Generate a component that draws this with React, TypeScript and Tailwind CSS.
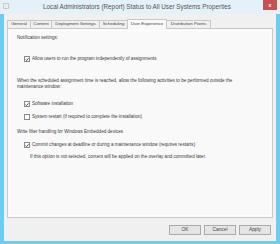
import React from "react";

const TABS = [
  { label: "General", w: "w-[24px]" },
  { label: "Content", w: "w-[22px]" },
  { label: "Deployment Settings", w: "w-[49px]" },
  { label: "Scheduling", w: "w-[29px]" },
  { label: "User Experience", w: "w-[40px]", active: true },
  { label: "Distribution Points", w: "w-[45px]" },
];

function Check({ checked }: { checked?: boolean }) {
  return (
    <div className="flex h-[6px] w-[6px] shrink-0 items-center justify-center border border-[#8a8a8a] bg-white">
      {checked ? (
        <svg width="5" height="5" viewBox="0 0 10 10">
          <path d="M1.5 5.2 L4 7.8 L8.6 2" fill="none" stroke="#222" strokeWidth="2" />
        </svg>
      ) : null}
    </div>
  );
}

function Btn({ label }: { label: string }) {
  return (
    <div className="flex h-[10px] w-[32px] items-center justify-center border border-[#acacac] bg-[#e5e5e5] text-[4.8px] text-[#444]">
      {label}
    </div>
  );
}

export default function App() {
  return (
    <div className="flex h-[244px] w-[280px] flex-col bg-[#6ccdf0] font-['Liberation_Sans',Arial,sans-serif] text-[#333]">
      {/* title bar */}
      <div className="flex h-[14px] items-start bg-[#e4f1f8]">
        <div className="ml-[3px] mt-[3px] h-[6px] w-[6px] border border-[#c9c9c9] bg-[#ececec]" />
        <div className="mt-[2px] flex-1 pl-[2px] text-center text-[6.3px] leading-[9px] text-[#555]">
          Local Administrators (Report) Status to All User Systems Properties
        </div>
        <div className="mr-[3px] flex h-[10px] w-[14px] items-center justify-center bg-[#c75050] text-[5px] font-bold leading-none text-white">
          x
        </div>
      </div>

      {/* client */}
      <div className="mx-[4px] mb-[3px] flex flex-1 flex-col bg-[#f0f0f0] px-[3px] pt-[4px]">
        <div className="flex h-[10px] items-end">
          {TABS.map((t) =>
            t.active ? (
              <div
                key={t.label}
                className={`${t.w} relative z-10 -mb-px -ml-px flex h-[10px] items-center justify-center border border-b-0 border-[#c8c8c8] bg-[#f9f9f9] text-[4.4px] leading-none text-[#444]`}
              >
                {t.label}
              </div>
            ) : (
              <div
                key={t.label}
                className={`${t.w} -ml-px flex h-[8px] items-center justify-center border border-b-0 border-[#c8c8c8] bg-[#f0f0f0] text-[4.4px] leading-none text-[#444] first:ml-0`}
              >
                {t.label}
              </div>
            )
          )}
        </div>

        <div className="h-[190px] border border-[#c8c8c8] bg-[#f9f9f9] p-px">
          <div className="h-full border border-white pl-[7px] pt-[4px] text-[4.6px] leading-[6px] text-[#3a3a3a]">
            <div>Notification settings:</div>
            <div className="mt-[15px] flex items-center gap-[2px] pl-[7px]">
              <Check checked />
              <span>Allow users to run the program independently of assignments</span>
            </div>
            <div className="mt-[16px]">
              When the scheduled assignment time is reached, allow the following activities to be performed outside the
              <br />
              maintenance window:
            </div>
            <div className="mt-[11px] flex items-center gap-[2px] pl-[7px]">
              <Check checked />
              <span>Software installation</span>
            </div>
            <div className="mt-[7px] flex items-center gap-[2px] pl-[7px]">
              <Check />
              <span>System restart (if required to complete the installation)</span>
            </div>
            <div className="mt-[9px]">Write filter handling for Windows Embedded devices</div>
            <div className="mt-[7px] flex items-center gap-[2px] pl-[7px]">
              <Check checked />
              <span>Commit changes at deadline or during a maintenance window (requires restarts)</span>
            </div>
            <div className="mt-[6px] pl-[13px]">
              If this option is not selected, content will be applied on the overlay and committed later.
            </div>
          </div>
        </div>

        <div className="flex flex-1 items-center justify-end gap-[3px] pr-[2px]">
          <Btn label="OK" />
          <Btn label="Cancel" />
          <Btn label="Apply" />
        </div>
      </div>
    </div>
  );
}
